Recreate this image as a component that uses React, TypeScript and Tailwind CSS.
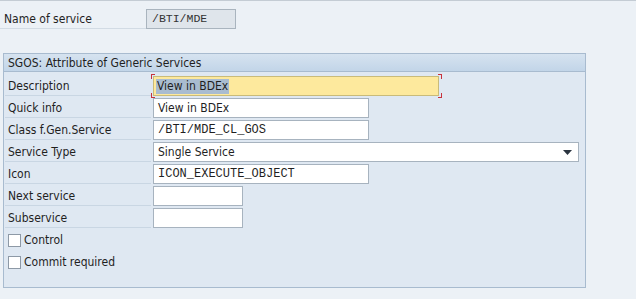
import React from "react";

const font = "font-['Tahoma','DejaVu_Sans_Condensed','Liberation_Sans',sans-serif]";
const mono = "font-['Liberation_Mono','Courier_New',monospace]";

function Label({ children }: { children: React.ReactNode }) {
  return (
    <div className="flex h-[20px] w-[146px] shrink-0 items-center border-b border-[#c9d6e3] pl-[3px] pt-[1px] text-[12px] text-[#1f1f1f]">
      {children}
    </div>
  );
}

function Field({ value, width, mono: isMono }: { value?: string; width: number; mono?: boolean }) {
  return (
    <div
      className={`flex h-[20px] items-center border border-[#a7b3bf] bg-white pl-[4px] text-[12px] text-[#1f1f1f] ${
        isMono ? `${mono} text-[11.5px]` : ""
      }`}
      style={{ width }}
    >
      {value}
    </div>
  );
}

function Row({ label, children }: { label: string; children: React.ReactNode }) {
  return (
    <div className="flex h-[22px] items-center gap-[2px]">
      <Label>{label}</Label>
      {children}
    </div>
  );
}

function Check({ label }: { label: string }) {
  return (
    <div className="flex h-[22px] items-center pl-[3px] text-[12px] text-[#1f1f1f]">
      <span className="mr-[3px] h-[13px] w-[13px] border border-[#8d99a6] bg-white" />
      {label}
    </div>
  );
}

export default function App() {
  return (
    <div className={`h-[299px] w-[636px] overflow-hidden border-t border-[#c4ccd4] bg-[#ecf1f6] ${font}`}>
      <div className="mt-[8px] flex h-[20px] items-center">
        <div className="flex h-[20px] w-[146px] items-center border-b border-[#d2dbe4] pl-[4px] pt-[1px] text-[12px] text-[#1f1f1f]">
          Name of service
        </div>
        <div
          className={`flex h-[20px] w-[90px] items-center border border-[#a9b4be] bg-[#dfe5eb] pl-[5px] text-[11.5px] text-[#333] ${mono}`}
        >
          /BTI/MDE
        </div>
      </div>

      <div className="ml-[3px] mt-[24px] w-[583px] border border-[#a8bbcf] bg-[#dfe8f2]">
        <div className="flex h-[18px] items-center border-b border-[#a8bbcf] bg-gradient-to-b from-[#d6e3f0] to-[#c2d5e8] pl-[4px] pt-[1px] text-[12px] text-[#1f1f1f]">
          SGOS: Attribute of Generic Services
        </div>
        <div className="pl-[1px] pt-[3px] pb-[14px]">
          <Row label="Description">
            <div className="relative">
              <div className="flex h-[20px] w-[286px] items-center border border-[#c9bb7a] bg-[#fde99d] pl-[2px] text-[12px] text-[#1f1f1f]">
                <span className="bg-[#a9bcd0] px-[1px] leading-[15px]">View in BDEx</span>
              </div>
              <span className="absolute -left-[2px] -top-[2px] h-[5px] w-[4px] border-l border-t border-[#c8323c]" />
              <span className="absolute -bottom-[2px] -left-[2px] h-[5px] w-[4px] border-b border-l border-[#c8323c]" />
              <span className="absolute -right-[3px] -top-[2px] h-[5px] w-[4px] border-r border-t border-[#c8323c]" />
              <span className="absolute -bottom-[2px] -right-[3px] h-[5px] w-[4px] border-b border-r border-[#c8323c]" />
            </div>
          </Row>
          <Row label="Quick info">
            <Field value="View in BDEx" width={216} />
          </Row>
          <Row label="Class f.Gen.Service">
            <Field value="/BTI/MDE_CL_GOS" width={216} mono />
          </Row>
          <Row label="Service Type">
            <div className="flex h-[20px] w-[426px] items-center justify-between border border-[#a7b3bf] bg-white pl-[4px] pr-[6px] text-[12px] text-[#1f1f1f]">
              <span>Single Service</span>
              <svg width="9" height="5" viewBox="0 0 9 5">
                <path d="M0 0h9L4.5 5z" fill="#2b3440" />
              </svg>
            </div>
          </Row>
          <Row label="Icon">
            <Field value="ICON_EXECUTE_OBJECT" width={216} mono />
          </Row>
          <Row label="Next service">
            <Field width={90} />
          </Row>
          <Row label="Subservice">
            <Field width={90} />
          </Row>
          <Check label="Control" />
          <Check label="Commit required" />
        </div>
      </div>
    </div>
  );
}
